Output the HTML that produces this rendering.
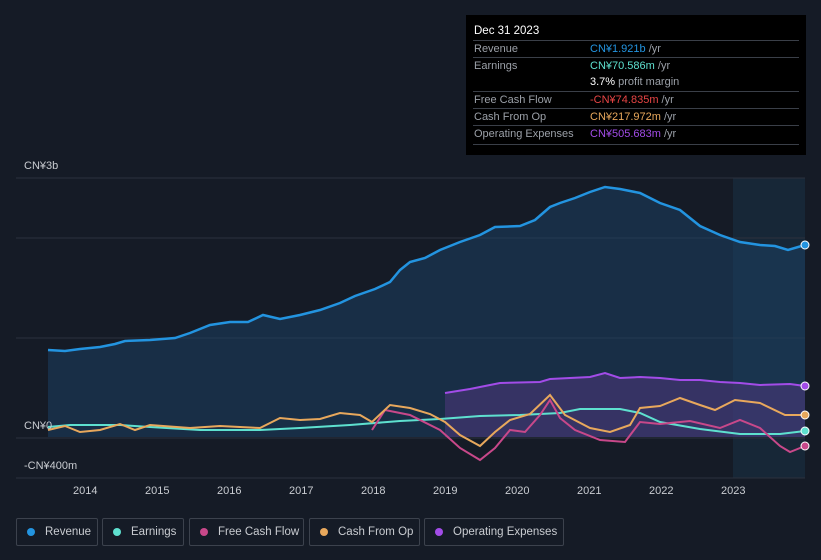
<!DOCTYPE html>
<html><head><meta charset="utf-8"><style>
body{margin:0;width:821px;height:560px;background:#151b26;font-family:"Liberation Sans",sans-serif;overflow:hidden;position:relative}
.tip{position:absolute;left:466px;top:15px;width:340px;height:140px;background:#000;color:#fff;font-size:11px}
.tip .h{position:absolute;left:8px;top:10px;font-size:11.5px}
.row{position:absolute;left:7px;width:326px;border-top:1px solid #3a3f48;height:17px}
.row span{position:absolute;top:2px}
.l{left:1px;color:#9ba0a8}.v{left:117px}
.leg{position:absolute;top:518px;height:28px;border:1px solid #3c424d;border-radius:2px;color:#c9ccd1;font-size:11.5px;line-height:26px;box-sizing:border-box;white-space:nowrap}
.leg i{position:absolute;left:10px;top:9px;width:8px;height:8px;border-radius:50%}
.leg b{position:absolute;font-weight:normal;top:0}
.ax{position:absolute;color:#c9ccd1;font-size:11px}
</style></head><body>
<svg width="821" height="560" style="position:absolute;left:0;top:0">
<rect x="733" y="178" width="72" height="300" fill="#17293a" opacity="0.9"/>
<g stroke="#2c323d" stroke-width="1">
<line x1="16" y1="178" x2="805" y2="178"/><line x1="16" y1="238" x2="805" y2="238"/><line x1="16" y1="338" x2="805" y2="338"/><line x1="16" y1="438" x2="805" y2="438"/><line x1="16" y1="478" x2="805" y2="478"/></g>
<path d="M48,350 L65,351 80,349 100,347 115,344 125,341 150,340 175,338 190,333 210,325 230,322 248,322 263,315 280,319 300,315 320,310 340,303 355,296 375,289 390,282 400,270 410,262 425,258 440,250 460,242 480,235 495,227 520,226 535,220 550,207 560,203 575,198 590,192 605,187 620,189 640,193 660,203 680,210 700,226 720,235 740,242 760,245 775,246 788,250 805,245 L805,437 L48,437Z" fill="#1b4266" opacity="0.5"/>
<path d="M48,350 L65,351 80,349 100,347 115,344 125,341 150,340 175,338 190,333 210,325 230,322 248,322 263,315 280,319 300,315 320,310 340,303 355,296 375,289 390,282 400,270 410,262 425,258 440,250 460,242 480,235 495,227 520,226 535,220 550,207 560,203 575,198 590,192 605,187 620,189 640,193 660,203 680,210 700,226 720,235 740,242 760,245 775,246 788,250 805,245" fill="none" stroke="#2394e0" stroke-width="2.5"/>
<path d="M445,393 L470,389 490,385 500,383 540,382 550,379 570,378 590,377 605,373 620,378 640,377 660,378 680,380 700,380 720,382 740,383 760,385 790,384 805,386 L805,437 L445,437Z" fill="#5b3a8a" opacity="0.45"/>
<path d="M445,393 L470,389 490,385 500,383 540,382 550,379 570,378 590,377 605,373 620,378 640,377 660,378 680,380 700,380 720,382 740,383 760,385 790,384 805,386" fill="none" stroke="#a24ce8" stroke-width="2"/>
<path d="M48,427 L70,425 120,425 150,427 200,430 260,430 300,428 350,425 400,421 440,419 480,416 520,415 560,413 580,409 620,409 640,413 660,422 700,429 740,434 780,434 805,431" fill="none" stroke="#5ee0cf" stroke-width="2"/>
<path d="M372,430 L385,410 410,415 440,430 460,448 480,460 495,448 510,430 525,432 540,415 550,400 560,418 575,430 600,440 625,442 640,422 660,424 690,421 720,428 740,420 760,428 780,446 790,452 805,446" fill="none" stroke="#c8488a" stroke-width="2"/>
<path d="M48,430 L65,426 80,432 100,430 120,424 135,430 150,425 190,428 220,426 260,428 280,418 300,420 320,419 340,413 360,415 372,422 390,405 410,408 430,414 445,422 460,435 480,446 495,432 510,420 530,414 550,395 565,415 590,428 610,432 630,425 640,408 660,406 680,398 700,405 715,410 735,400 760,403 785,415 805,415" fill="none" stroke="#e8a85c" stroke-width="2"/>
<g stroke="#fff" stroke-width="1"><circle cx="805" cy="245" r="4" fill="#2394e0"/><circle cx="805" cy="386" r="4" fill="#a24ce8"/><circle cx="805" cy="415" r="4" fill="#e8a85c"/><circle cx="805" cy="431" r="4" fill="#5ee0cf"/><circle cx="805" cy="446" r="4" fill="#c8488a"/></g>
</svg>
<div class="ax" style="left:24px;top:160px">CN¥3b</div>
<div class="ax" style="left:24px;top:420px">CN¥0</div>
<div class="ax" style="left:24px;top:460px">-CN¥400m</div>
<div class="ax" style="left:73px;top:485px">2014</div><div class="ax" style="left:145px;top:485px">2015</div><div class="ax" style="left:217px;top:485px">2016</div><div class="ax" style="left:289px;top:485px">2017</div><div class="ax" style="left:361px;top:485px">2018</div><div class="ax" style="left:433px;top:485px">2019</div><div class="ax" style="left:505px;top:485px">2020</div><div class="ax" style="left:577px;top:485px">2021</div><div class="ax" style="left:649px;top:485px">2022</div><div class="ax" style="left:721px;top:485px">2023</div>
<div class="tip"><div class="h">Dec 31 2023</div>
<div class="row" style="top:25px"><span class="l">Revenue</span><span class="v"><b style="color:#2394e0;font-weight:normal">CN¥1.921b</b> <span style="position:static;color:#9ba0a8">/yr</span></span></div>
<div class="row" style="top:42px"><span class="l">Earnings</span><span class="v"><b style="color:#5ee0cf;font-weight:normal">CN¥70.586m</b> <span style="position:static;color:#9ba0a8">/yr</span></span></div>
<div class="row" style="top:59px;border:none"><span class="v">3.7% <span style="position:static;color:#9ba0a8">profit margin</span></span></div>
<div class="row" style="top:76px"><span class="l">Free Cash Flow</span><span class="v"><b style="color:#e84545;font-weight:normal">-CN¥74.835m</b> <span style="position:static;color:#9ba0a8">/yr</span></span></div>
<div class="row" style="top:93px"><span class="l">Cash From Op</span><span class="v"><b style="color:#e8a85c;font-weight:normal">CN¥217.972m</b> <span style="position:static;color:#9ba0a8">/yr</span></span></div>
<div class="row" style="top:110px"><span class="l">Operating Expenses</span><span class="v"><b style="color:#a24ce8;font-weight:normal">CN¥505.683m</b> <span style="position:static;color:#9ba0a8">/yr</span></span></div>
<div class="row" style="top:129px;height:0"></div>
</div>
<div class="leg" style="left:16px;width:82px"><i style="background:#2394e0"></i><b style="left:28px">Revenue</b></div>
<div class="leg" style="left:102px;width:82px"><i style="background:#5ee0cf"></i><b style="left:28px">Earnings</b></div>
<div class="leg" style="left:189px;width:115px"><i style="background:#c8488a"></i><b style="left:28px">Free Cash Flow</b></div>
<div class="leg" style="left:309px;width:111px"><i style="background:#e8a85c"></i><b style="left:28px">Cash From Op</b></div>
<div class="leg" style="left:424px;width:140px"><i style="background:#a24ce8"></i><b style="left:28px">Operating Expenses</b></div>
</body></html>
